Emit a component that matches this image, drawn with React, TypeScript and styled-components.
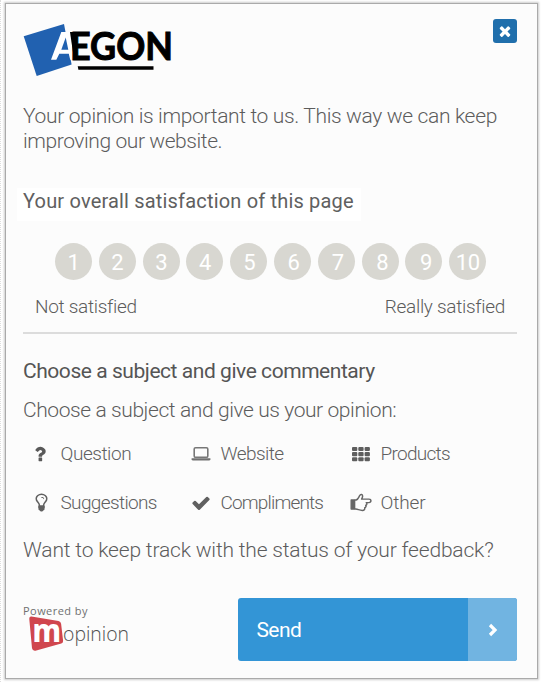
import React from "react";
import styled, { createGlobalStyle } from "styled-components";

const GlobalStyle = createGlobalStyle`
  * { box-sizing: border-box; }
  body { margin: 0; background: #fff; font-family: Roboto, "Noto Sans", sans-serif; color: #5c5c5c; }
  button { font: inherit; border: 0; padding: 0; }
`;

const Page = styled.div`
  width: 541px;
  height: 682px;
  padding: 3px 3px 3px 4px;
  background: #fff;
  border-left: 1px dotted #ddd;
  overflow: hidden;
`;

const Panel = styled.main`
  width: 533px;
  height: 676px;
  padding: 0 20px 0 17px;
  background: #fcfcfc;
  border: 1px solid #aaa;
  box-shadow: 0 0 2px 1px #ccc;
  display: flex;
  flex-direction: column;
`;

const Header = styled.header`
  display: flex;
  justify-content: space-between;
  height: 100px;
  padding-top: 15px;
`;

const CloseButton = styled.button`
  width: 24px;
  height: 24px;
  border-radius: 3px;
  background: #206fac;
  color: #fff;
  display: grid;
  place-items: center;
`;

const Line = styled.p<{ $size: number; $weight?: number; $spacing?: number }>`
  margin: 0;
  white-space: nowrap;
  font-size: ${(p) => p.$size}px;
  font-weight: ${(p) => p.$weight ?? 300};
  letter-spacing: ${(p) => p.$spacing ?? 0}px;
  line-height: 25px;
`;

const Intro = styled.section`
  height: 84px;
`;

const Highlight = styled.div`
  align-self: flex-start;
  width: 344px;
  height: 33px;
  margin-left: -6px;
  padding: 1px 0 0 6px;
  background: #fff;
  color: #606060;
`;

const Scale = styled.div`
  display: flex;
  gap: 6.8px;
  margin: 22px 0 0 32px;
`;

const Score = styled.button<{ $shift: number }>`
  flex: none;
  width: 37px;
  height: 37px;
  border-radius: 50%;
  background: #d8d7d1;
  color: #fff;
  font-size: 22px;
  font-weight: 400;
  letter-spacing: -0.5px;
  line-height: 37px;
  padding: 1px 0 0 ${(p) => p.$shift}px;
`;

const ScaleLabels = styled.div`
  display: flex;
  justify-content: space-between;
  height: 54px;
  padding: 14px 12px 0;
  border-bottom: 2px solid #dcdcdc;
`;

const Subject = styled.section`
  padding-top: 25px;
  height: 92px;
`;

const Heading = styled.div`
  height: 39px;
  color: #555;
`;

const Topics = styled.div`
  display: grid;
  grid-template-columns: 160px 160px 160px;
  grid-template-rows: 49px 49px;
  padding-left: 6px;
  margin-top: 3px;
`;

const Topic = styled.div`
  display: grid;
  grid-template-columns: 24px 1fr;
  column-gap: 7.5px;
  align-items: center;
  color: #606060;
`;

const IconBox = styled.span`
  display: grid;
  place-items: center;
  svg { display: block; }
`;

const Track = styled.div`
  height: 71px;
  padding-top: 11px;
`;

const Footer = styled.footer`
  display: flex;
  justify-content: space-between;
  height: 63px;
`;

const SendButton = styled.button`
  display: flex;
  width: 279.5px;
  height: 63px;
  border-radius: 3px;
  overflow: hidden;
  color: #fff;
  background: #3395d6;
`;

const SendLabel = styled.span`
  flex: 1;
  padding-left: 19px;
  text-align: left;
  font-size: 21px;
  letter-spacing: -0.6px;
  line-height: 64px;
`;

const SendArrow = styled.span`
  width: 49px;
  height: 63px;
  display: grid;
  place-items: center;
  background: #71b4e1;
`;

const glyphs = {
  times:
    "M1490 1322q0 40-28 68l-136 136q-28 28-68 28t-68-28l-294-294-294 294q-28 28-68 28t-68-28l-136-136q-28-28-28-68t28-68l294-294-294-294q-28-28-28-68t28-68l136-136q28-28 68-28t68 28l294 294 294-294q28-28 68-28t68 28l136 136q28 28 28 68t-28 68l-294 294 294 294q28 28 28 68z",
  check:
    "M1671 566q0 40-28 68l-724 724-136 136q-28 28-68 28t-68-28l-136-136-362-362q-28-28-28-68t28-68l136-136q28-28 68-28t68 28l294 295 656-657q28-28 68-28t68 28l136 136q28 28 28 68z",
  bulb:
    "M1120 576q0 13-9.5 22.5t-22.5 9.5-22.5-9.5-9.5-22.5q0-46-54-71t-106-25q-13 0-22.5-9.5t-9.5-22.5 9.5-22.5 22.5-9.5q50 0 99.5 16t87 54 37.5 90zm160 0q0-72-34.5-134t-90-101.5-123-62-136.5-22.5-136.5 22.5-123 62-90 101.5-34.5 134q0 101 68 180 10 11 30.5 33t30.5 33q128 153 141 298h228q13-145 141-298 10-11 30.5-33t30.5-33q68-79 68-180zm128 0q0 155-103 268-45 49-74.5 87t-59.5 95.5-34 107.5q47 28 47 82 0 37-25 64 25 27 25 64 0 52-45 81 13 23 13 47 0 46-31.5 71t-77.5 25q-20 44-60 70t-87 26-87-26-60-70q-46 0-77.5-25t-31.5-71q0-24 13-47-45-29-45-81 0-37 25-64-25-27-25-64 0-54 47-82-4-50-34-107.5t-59.5-95.5-74.5-87q-103-113-103-268 0-99 44.5-184.5t117-142 164-89 186.5-32.5 186.5 32.5 164 89 117 142 44.5 184.5z",
  question:
    "M1088 1256v240q0 16-12 28t-28 12h-240q-16 0-28-12t-12-28v-240q0-16 12-28t28-12h240q16 0 28 12t12 28zm316-600q0 54-15.5 101t-35 76.5-55 59.5-57.5 43.5-61 35.5q-41 23-68.5 65t-27.5 67q0 17-12 32.5t-28 15.5h-240q-15 0-25.5-18.5t-10.5-37.5v-45q0-83 65-156.5t143-108.5q59-27 84-56t25-76q0-42-46.5-74t-107.5-32q-65 0-108 29-35 25-107 115-13 16-31 16-12 0-25-8l-164-125q-13-10-15.5-25t5.5-28q160-266 464-266 80 0 161 31t146 83 106 127.5 41 158.5z",
};

const Glyph = ({ name, size }: { name: keyof typeof glyphs; size: number }) => (
  <svg width={size} height={size} viewBox="0 0 1792 1792" fill="currentColor">
    <path d={glyphs[name]} />
  </svg>
);

const QuestionMark = () => (
  <svg width="24" height="20" viewBox="-90 0 2150 1792" fill="#595959">
    <path d={glyphs.question} />
  </svg>
);

const Laptop = () => (
  <svg width="20" height="16" viewBox="0 0 20 16">
    <rect x="3.2" y="1.7" width="13.6" height="9.6" rx="1.4" fill="none" stroke="#777" strokeWidth="1.6" />
    <path d="M.6 12.2h18.8v1.1q0 1.3-1.6 1.3H2.2q-1.6 0-1.6-1.3z" fill="#707070" />
  </svg>
);

const Tiles = () => (
  <svg width="20" height="16" viewBox="0 0 20 16" fill="#5e5e5e">
    {[1, 6.1, 11.2].map((y) =>
      [1, 7.3, 13.6].map((x) => <rect key={`${x}-${y}`} x={x} y={y} width="5.3" height="4.1" rx="1" />)
    )}
  </svg>
);

const Hand = () => (
  <svg width="22" height="20" viewBox="0 0 22 20" fill="none" stroke="#666" strokeWidth="1.45" strokeLinejoin="round">
    <path d="M1.2 7h3.4v9.1H1.2z" fill="#666" />
    <path d="M4.6 7h1.6C8 6.5 8.7 4.4 9.6 2.7 10.4 1 12.9 1.2 12.6 3.4c-.1 1-.6 2-1 2.7h7.3c2.7 0 2.7 3.5 0 3.5h-2.7c1.1.8.8 2.4-.5 2.7.7.9.1 2.4-1 2.5.3 1.6-.6 2.6-2.2 2.6-2.9.1-4.6-1.4-6.6-1.4H4.6" />
  </svg>
);

const topics = [
  { label: "Question", icon: <QuestionMark />, spacing: -0.45 },
  { label: "Website", icon: <Laptop />, spacing: -0.55 },
  { label: "Products", icon: <Tiles />, spacing: -0.72 },
  { label: "Suggestions", icon: <Glyph name="bulb" size={21} />, spacing: -0.64 },
  { label: "Compliments", icon: <Glyph name="check" size={20} />, spacing: -0.83 },
  { label: "Other", icon: <Hand />, spacing: -0.15 },
];

const AegonLogo = () => (
  <svg width="152" height="58" viewBox="23 20 152 58">
    <path d="M23.7 37.3 64 25l7.6 40.5L36.7 77z" fill="#2161b0" />
    <path d="M61.3 33H70l4.2 27.7h-4l-1.4-6H59.3l-3 6H51z" fill="#fff" />
    <path d="m61.3 50.8 4.4-12.2 2.6 12.2z" fill="#2161b0" />
    <path d="M70 33h5v27.3h-1z" fill="#000" />
    <text x="70" y="60.6" fontFamily="Lato" fontWeight="700" fontSize="38" stroke="#000" strokeWidth="1" textLength="103" lengthAdjust="spacingAndGlyphs" fill="#000">EGON</text>
    <path d="M77.7 67.2h75.8v3.5H78.4z" fill="#000" />
  </svg>
);

const MopinionLogo = () => (
  <svg width="115" height="56" viewBox="23 598 115 56">
    <path d="M31.5 616.5 58.5 621q2.3.5 2.6 2.7l2 17q.3 2-1.8 2.7l-25 7q-3.7 1-4.3-2.2l-2.7-29q-.2-3 2.2-2.7z" fill="#d0464e" />
    <text x="23" y="614.8" fontFamily="Open Sans" fontSize="11" textLength="64.5" fill="#707070">Powered by</text>
    <text x="32.5" y="641.5" fontFamily="Noto Sans" fontWeight="800" fontSize="32" textLength="28.5" lengthAdjust="spacingAndGlyphs" fill="#fff">m</text>
    <text x="63" y="641" fontFamily="Open Sans" fontWeight="300" fontSize="20.5" textLength="66" lengthAdjust="spacingAndGlyphs" fill="#505050">opinion</text>
  </svg>
);

const shifts = [0, 0, 0, 0, 1, 2, 3, 4, 4, 0];

export default function App() {
  return (
    <>
      <GlobalStyle />
      <Page>
        <Panel>
          <Header>
            <AegonLogo />
            <CloseButton aria-label="Close"><Glyph name="times" size={16} /></CloseButton>
          </Header>
          <Intro>
            <Line $size={21} $spacing={-0.35}>Your opinion is important to us. This way we can keep</Line>
            <Line $size={21} $spacing={-0.42}>improving our website.</Line>
          </Intro>
          <Highlight>
            <Line $size={20} $weight={400} $spacing={0.18}>Your overall satisfaction of this page</Line>
          </Highlight>
          <Scale>
            {shifts.map((shift, i) => (
              <Score key={i} $shift={shift}>{i + 1}</Score>
            ))}
          </Scale>
          <ScaleLabels>
            <Line $size={19} $spacing={-0.3}>Not satisfied</Line>
            <Line $size={19} $spacing={-0.3}>Really satisfied</Line>
          </ScaleLabels>
          <Subject>
            <Heading>
              <Line $size={21} $weight={400} $spacing={-0.45}>Choose a subject and give commentary</Line>
            </Heading>
            <Line $size={21} $spacing={-0.41}>Choose a subject and give us your opinion:</Line>
          </Subject>
          <Topics>
            {topics.map((t) => (
              <Topic key={t.label}>
                <IconBox>{t.icon}</IconBox>
                <Line $size={19} $spacing={t.spacing}>{t.label}</Line>
              </Topic>
            ))}
          </Topics>
          <Track>
            <Line $size={21} $spacing={-0.18}>Want to keep track with the status of your feedback?</Line>
          </Track>
          <Footer>
            <MopinionLogo />
            <SendButton>
              <SendLabel>Send</SendLabel>
              <SendArrow>
                <svg width="12" height="14" viewBox="0 0 12 14" fill="none" stroke="#fff" strokeWidth="3.2">
                  <path d="m3 2 5 5-5 5" />
                </svg>
              </SendArrow>
            </SendButton>
          </Footer>
        </Panel>
      </Page>
    </>
  );
}
